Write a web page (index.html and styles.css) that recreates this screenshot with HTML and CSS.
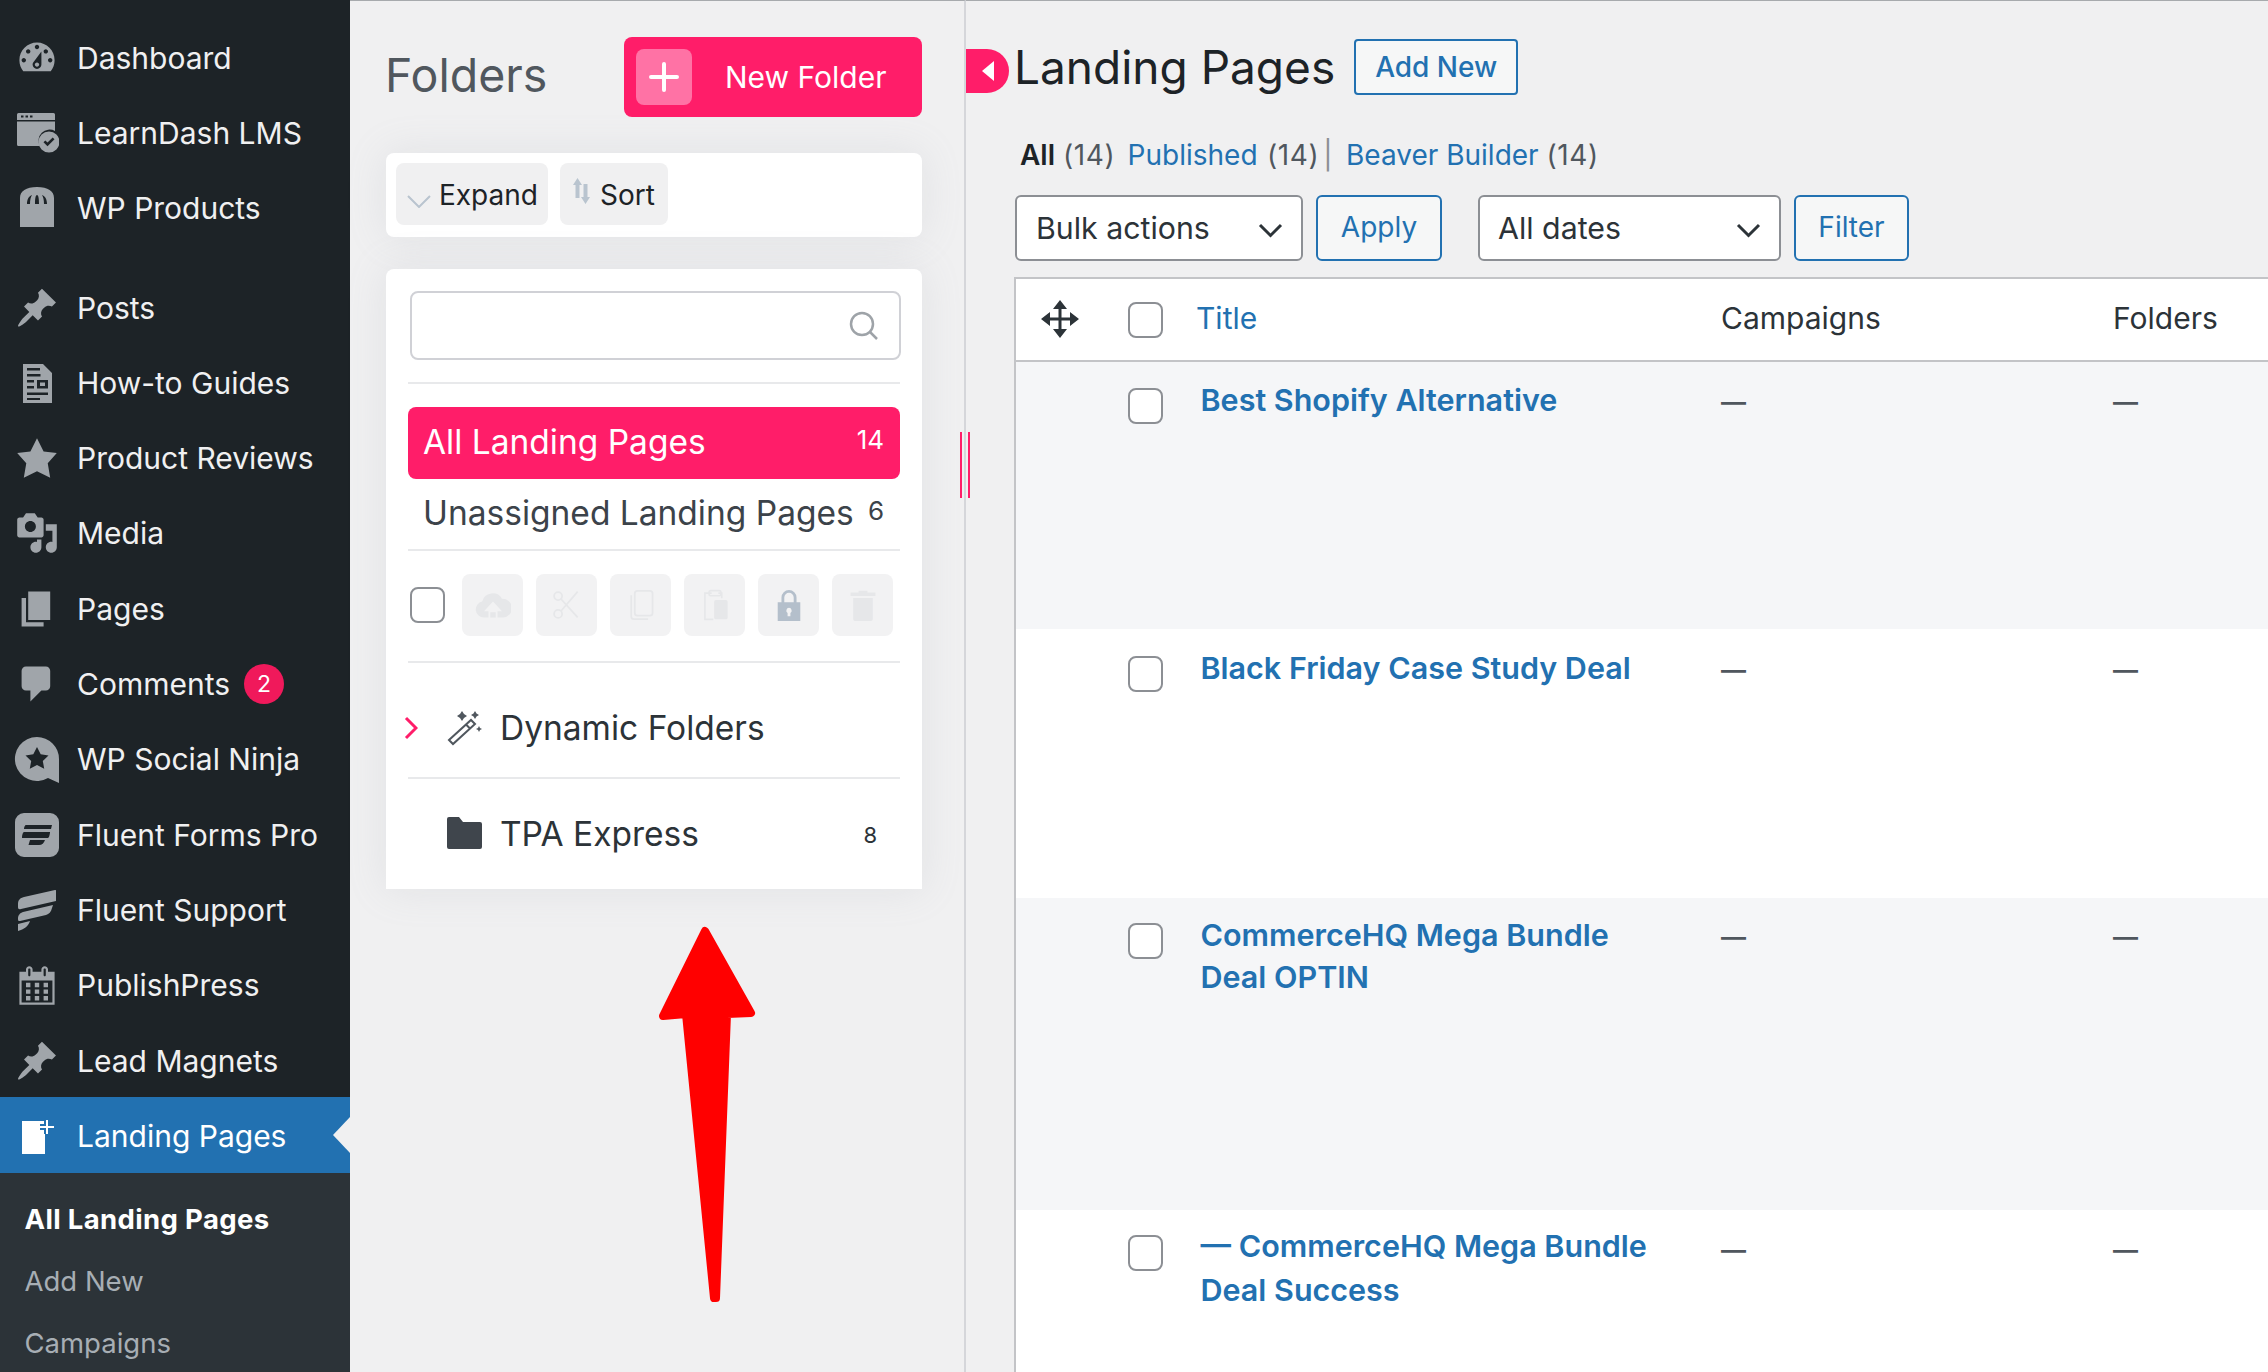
FILE: index.html
```html
<!DOCTYPE html>
<html lang="en">
<head>
<meta charset="utf-8">
<title>Landing Pages</title>
<link rel="stylesheet" href="styles.css">
</head>
<body>
<div class="page">
  <aside class="sidebar">
    <nav class="menu">
      <a class="item"><svg class="ico" viewBox="0 0 20 20"><path fill-rule="evenodd" d="M3.76 16h12.48c1.1-1.37 1.76-3.11 1.76-5 0-4.42-3.58-8-8-8s-8 3.58-8 8c0 1.89.66 3.63 1.76 5zM10 4c.55 0 1 .45 1 1s-.45 1-1 1-1-.45-1-1 .45-1 1-1zM6 6c.55 0 1 .45 1 1s-.45 1-1 1-1-.45-1-1 .45-1 1-1zm8 0c.55 0 1 .45 1 1s-.45 1-1 1-1-.45-1-1 .45-1 1-1zm-5.37 5.55L12 7v6c0 1.1-.9 2-2 2s-2-.9-2-2c0-.57.24-1.08.63-1.45zM4 10c.55 0 1 .45 1 1s-.45 1-1 1-1-.45-1-1 .45-1 1-1zm12 0c.55 0 1 .45 1 1s-.45 1-1 1-1-.45-1-1 .45-1 1-1zm-5 3c0-.55-.45-1-1-1s-1 .45-1 1 .45 1 1 1 1-.45 1-1z"/></svg><span>Dashboard</span></a>
      <a class="item"><svg class="ico" viewBox="0 0 44 44"><path fill-rule="evenodd" d="M2 3.500a1.500 1.500 0 0 1 1.500-1.500h35a1.500 1.500 0 0 1 1.500 1.500v5.500H2zM6 4.500h2.500v2H6zM10.500 4.500H13v2h-2.500zM15 4.500h2.500v2H15z"/><path d="M2 10.500h38v9.500a11 11 0 0 0-15 15H3.500A1.500 1.500 0 0 1 2 33.500z"/><path fill-rule="evenodd" d="M34 20.500a10.500 10.500 0 1 1 0 21 10.500 10.500 0 0 1 0-21zm-1.500 14.700l-4-4 1.800-1.800 2.200 2.200 5.200-5.200 1.800 1.800z"/></svg><span>LearnDash LMS</span></a>
      <a class="item"><svg class="ico" viewBox="0 0 44 44"><path fill-rule="evenodd" d="M5 19V12C5 5 11 1 22 1s17 4 17 11v29H5zM12 18h3c0-4 .7-7 2-9-3 1-5 4-5 9zM20 18h4c0-5-.5-9-2-9s-2 4-2 9zM29 18h3c0-5-2-8-5-9 1.300 2 2 5 2 9z"/></svg><span>WP Products</span></a>
      <div class="sep"></div>
      <a class="item"><svg class="ico" viewBox="0 0 20 20"><path d="M10.440 3.020l1.820-1.820 6.360 6.350-1.830 1.820c-1.050-.68-2.480-.57-3.410.36l-.75.75c-.92.93-1.040 2.350-.35 3.410l-1.830 1.820-2.410-2.410-2.800 2.790c-.42.42-3.380 2.710-3.800 2.290s1.860-3.390 2.280-3.810l2.790-2.790L4.100 9.360l1.830-1.820c1.050.69 2.480.57 3.400-.36l.75-.75c.93-.92 1.050-2.350.36-3.410z"/></svg><span>Posts</span></a>
      <a class="item"><svg class="ico" viewBox="0 0 44 44"><path fill-rule="evenodd" d="M8 3h20l9 9v30H8zM12 7v2.500h13V7zm0 6v2.500h13.500V13zm0 6v2.500h7V19zm0 6v2.500h7V25zm0 6.500V34h21v-2.500zM22 19v8.500h11V19zm3 2.500h5V25h-5zM12 37v2h13v-2z"/></svg><span>How-to Guides</span></a>
      <a class="item"><svg class="ico" viewBox="0 0 20 20"><path d="M10 1l3 6 6 .75-4.120 4.620L16 19l-6-3-6 3 1.130-6.630L1 7.750 7 7z"/></svg><span>Product Reviews</span></a>
      <a class="item"><svg class="ico" viewBox="0 0 20 20"><path fill-rule="evenodd" d="M13 11V4c0-.55-.45-1-1-1h-1.670L9 1H5L3.670 3H2c-.55 0-1 .45-1 1v7c0 .55.45 1 1 1h10c.55 0 1-.45 1-1zM7 4.500c1.380 0 2.500 1.120 2.500 2.500S8.380 9.500 7 9.500 4.500 8.380 4.500 7 5.620 4.500 7 4.500zM14 6h5v10.500c0 1.380-1.120 2.500-2.500 2.500S14 17.880 14 16.500s1.120-2.500 2.500-2.500c.17 0 .34.02.5.05V9h-3V6zm-4 8.050V13h2v3.500c0 1.380-1.120 2.500-2.500 2.500S7 17.880 7 16.500 8.120 14 9.500 14c.17 0 .34.02.5.05z"/></svg><span>Media</span></a>
      <a class="item"><svg class="ico" viewBox="0 0 20 20"><path d="M6 15V2h10v13H6zm-1 1h8v2H3V5h2v11z"/></svg><span>Pages</span></a>
      <a class="item"><svg class="ico" viewBox="0 0 20 20"><path d="M5 2h9c1.100 0 2 .9 2 2v7c0 1.100-.9 2-2 2h-2l-5 5v-5H5c-1.100 0-2-.9-2-2V4c0-1.100.9-2 2-2z"/></svg><span>Comments</span><b class="badge">2</b></a>
      <a class="item"><svg class="ico ico-free" viewBox="0 0 44 44"><path fill-rule="evenodd" d="M22 0a22 22 0 0 1 22 22v24L33 41A22 22 0 1 1 22 0zm0 10l3.700 7.300 7.800 1.100-5.700 5.500 1.400 7.900-7.200-3.800-7.200 3.800 1.400-7.900-5.700-5.500 7.800-1.100z"/></svg><span>WP Social Ninja</span></a>
      <a class="item"><svg class="ico" viewBox="0 0 44 44"><path fill-rule="evenodd" d="M9 0h26a9 9 0 0 1 9 9v26a9 9 0 0 1-9 9H9a9 9 0 0 1-9-9V9a9 9 0 0 1 9-9zM11 12c-1 0-2 2-2 4h27l1-4zM9 19c-1 0-2 3-2 6h26c1 0 2-4 2-6zM15 27l-1.500 5H24c3 0 5-2 6-5z"/></svg><span>Fluent Forms Pro</span></a>
      <a class="item"><svg class="ico" viewBox="0 0 44 44"><path d="M3 16c0-4 2-6 6-7l31-7c1-.2 1 .5 1 1v10L6 21c-2 .5-3 0-3-2zM3 31c0-4 2-6 5-7l30-7-1 3c-1 4-3 6-6 7L5 33c-1 .3-2 0-2-2zM3 36l12-3c-2 6-6 8-12 10z"/></svg><span>Fluent Support</span></a>
      <a class="item"><svg class="ico" viewBox="0 0 20 20"><path fill-rule="evenodd" d="M15 4h3v15H2V4h3V3c0-.41.15-.76.44-1.060.29-.29.65-.44 1.060-.44s.77.15 1.060.44c.29.3.44.65.44 1.060v1h4V3c0-.41.15-.76.44-1.060.29-.29.65-.44 1.060-.44s.77.15 1.060.44c.29.3.44.65.44 1.060v1zM6 3v2.500c0 .14.05.26.15.36.09.09.21.14.35.14s.26-.05.35-.14c.1-.1.15-.22.15-.36V3c0-.14-.05-.26-.15-.35-.09-.1-.21-.15-.35-.15s-.26.05-.35.15c-.1.09-.15.21-.15.35zm7 0v2.500c0 .14.05.26.14.36.1.09.22.14.36.14s.26-.05.36-.14c.09-.1.14-.22.14-.36V3c0-.14-.05-.26-.14-.35-.1-.1-.22-.15-.36-.15s-.26.05-.36.15c-.09.09-.14.21-.14.35zm4 15V8H3v10h14zM7 9v2H5V9h2zm2 0h2v2H9V9zm4 2V9h2v2h-2zm-6 1v2H5v-2h2zm2 0h2v2H9v-2zm4 2v-2h2v2h-2zm-6 1v2H5v-2h2zm4 2H9v-2h2v2zm4 0h-2v-2h2v2z"/></svg><span>PublishPress</span></a>
      <a class="item"><svg class="ico" viewBox="0 0 20 20"><path d="M10.440 3.020l1.820-1.820 6.360 6.350-1.830 1.820c-1.050-.68-2.480-.57-3.410.36l-.75.75c-.92.93-1.040 2.350-.35 3.410l-1.830 1.820-2.410-2.410-2.800 2.790c-.42.42-3.380 2.710-3.800 2.290s1.860-3.390 2.280-3.810l2.790-2.790L4.100 9.360l1.830-1.820c1.050.69 2.480.57 3.400-.36l.75-.75c.93-.92 1.050-2.350.36-3.410z"/></svg><span>Lead Magnets</span></a>
      <a class="item item-active"><svg class="ico" viewBox="0 0 44 44"><path d="M7 7h23v33H7z" fill="#fff"/><path d="M32 6v14M25 13h14" fill="none" stroke="#2271b1" stroke-width="6"/><path d="M32 6v14M25 13h14" fill="none" stroke="#fff" stroke-width="2"/></svg><span>Landing Pages</span></a>
    </nav>
    <ul class="submenu">
      <li class="sub-current">All Landing Pages</li>
      <li>Add New</li>
      <li>Campaigns</li>
    </ul>
  </aside>

  <section class="folders">
    <header class="folders-head">
      <h2 class="folders-title">Folders</h2>
      <button class="new-folder"><span class="plus"><svg viewBox="0 0 32 32"><path d="M16 3v26M3 16h26"/></svg></span><span class="new-label">New Folder</span></button>
    </header>
    <div class="card tools">
      <button class="tool tool-expand"><svg class="tool-ico" viewBox="0 0 24 13"><path d="M1 1l11 11L23 1"/></svg>Expand</button>
      <button class="tool tool-sort"><svg class="sort-ico" viewBox="0 0 19 26"><path d="M5.500 0l4.500 7H7.500v13h-4V7H1zM11.500 6h4v13H18l-4.500 7L9 19h2.500z"/></svg>Sort</button>
    </div>
    <div class="card tree">
      <div class="search"><svg class="search-ico" viewBox="0 0 30 30"><circle cx="13" cy="13" r="11"/><path d="M21 21l7 7"/></svg></div>
      <div class="rule rule-a"></div>
      <div class="folder-row folder-row-on"><span>All Landing Pages</span><small>14</small></div>
      <div class="folder-row folder-row-un"><span>Unassigned Landing Pages</span><small>6</small></div>
      <div class="rule rule-b"></div>
      <div class="actions">
        <span class="check check-tree"></span>
        <span class="act"><svg viewBox="0 0 40 32"><path fill-rule="evenodd" d="M10 30a9 9 0 0 1-2-17.800A12 12 0 0 1 30 9a10.500 10.500 0 0 1 1 21h-6v-7h5L20 12 10 23h5v7z"/><path d="M17 24h6v6h-6z"/></svg></span>
        <span class="act"><svg viewBox="0 0 32 36"><g class="stroke"><circle cx="6" cy="8" r="4.500"/><circle cx="6" cy="28" r="4.500"/><path d="M9 11l19 21M9 25L28 3"/></g></svg></span>
        <span class="act"><svg viewBox="0 0 32 36"><g class="stroke"><rect x="9" y="2" width="20" height="28" rx="3"/><path d="M5 7v24a3 3 0 0 0 3 3h16"/></g></svg></span>
        <span class="act"><svg viewBox="0 0 32 38"><g class="stroke"><path d="M12 5H4v31h10M20 5h4v6"/><rect x="9" y="2" width="14" height="6" rx="2"/></g><rect x="15" y="13" width="16" height="23" rx="2"/></svg></span>
        <span class="act act-lock"><svg viewBox="0 0 26 34"><path fill-rule="evenodd" d="M5 14V9a8 8 0 0 1 16 0v5h4v20H1V14zm3 0h10V9a5 5 0 0 0-10 0zm5 6a3 3 0 0 0-1.500 5.500V29h3v-3.500A3 3 0 0 0 13 20z"/></svg></span>
        <span class="act"><svg viewBox="0 0 30 36"><path d="M10 2h10v2h9v4H1V4h9zM4 10h22v24a2 2 0 0 1-2 2H6a2 2 0 0 1-2-2z"/></svg></span>
      </div>
      <div class="rule rule-c"></div>
      <div class="tree-row tree-dynamic">
        <svg class="caret" viewBox="0 0 14 24"><path d="M2 2l10 10L2 22"/></svg>
        <svg class="wand" viewBox="0 0 36 36"><path class="wand-line" d="M2 30L24 10l4 4L6 34z M19 14.500l4 4"/><path class="wand-fill" d="M13 4l2-3 2 3 3 2-3 2-2 3-2-3-3-2zM28 1l1.500 2.500L32 5l-2.500 1.500L28 9l-1.500-2.500L24 5l2.500-1.500zM32 16l1 2 2 1-2 1-1 2-1-2-2-1 2-1z"/></svg>
        <span>Dynamic Folders</span>
      </div>
      <div class="rule rule-d"></div>
      <div class="tree-row tree-folder">
        <svg class="folder-ico" viewBox="0 0 35 32"><path d="M2 0h10l4 5h17a2 2 0 0 1 2 2v23a2 2 0 0 1-2 2H2a2 2 0 0 1-2-2V2a2 2 0 0 1 2-2z"/></svg>
        <span>TPA Express</span><small>8</small>
      </div>
    </div>
    <div class="handle"></div>
  </section>

  <main class="content">
    <span class="collapse"><svg viewBox="0 0 12 20"><path d="M12 0v20L0 10z"/></svg></span>
    <div class="title-row">
      <h1>Landing Pages</h1>
      <a class="add-new">Add New</a>
    </div>
    <p class="views"><b>All</b> <i>(14)</i> <a class="v-pub">Published</a> <i class="v-count">(14)</i><i class="pipe">|</i> <a class="v-bb">Beaver Builder</a> <i>(14)</i></p>
    <div class="filters">
      <div class="select select-bulk"><span>Bulk actions</span><svg viewBox="0 0 25 15"><path d="M2 2l10.500 10.500L23 2"/></svg></div>
      <button class="btn btn-apply">Apply</button>
      <div class="select select-dates"><span>All dates</span><svg viewBox="0 0 25 15"><path d="M2 2l10.500 10.500L23 2"/></svg></div>
      <button class="btn btn-filter">Filter</button>
    </div>
    <div class="table">
      <div class="thead grid">
        <svg class="move" viewBox="0 0 38 38"><path d="M19 0l7 9h-5.500v8.500H29V12l9 7-9 7v-5.500h-8.500V29H26l-7 9-7-9h5.500v-8.500H9V26l-9-7 9-7v5.500h8.500V9H12z"/></svg>
        <span class="check"></span>
        <a class="th-title">Title</a>
        <span class="th-text">Campaigns</span>
        <span class="th-text">Folders</span>
      </div>
      <div class="row grid row-1"><i></i><span class="check"></span><a>Best Shopify Alternative</a><span class="dash">—</span><span class="dash">—</span></div>
      <div class="row grid row-2"><i></i><span class="check"></span><a>Black Friday Case Study Deal</a><span class="dash">—</span><span class="dash">—</span></div>
      <div class="row grid row-3"><i></i><span class="check"></span><a>CommerceHQ Mega Bundle<br>Deal OPTIN</a><span class="dash">—</span><span class="dash">—</span></div>
      <div class="row grid row-4"><i></i><span class="check"></span><a>— CommerceHQ Mega Bundle<br>Deal Success</a><span class="dash">—</span><span class="dash">—</span></div>
    </div>
  </main>

  <svg class="arrow" viewBox="0 0 120 400"><path d="M65 26L111 108 87 109 76 393 74 393 46 109 23 111z"/></svg>
</div>
</body>
</html>
```

FILE: styles.css
```css
* { box-sizing: border-box; }
html, body { margin: 0; height: 100%; overflow: hidden; }
body { font-family: Inter, "Liberation Sans", sans-serif; color: #3c434a; background: #f0f0f1; }
button { font: inherit; border: 0; padding: 0; }
a { text-decoration: none; }
p, h1, h2, ul { margin: 0; padding: 0; }

.page { display: flex; height: 1372px; width: 2268px; position: relative; overflow: hidden; }

/* sidebar */
.sidebar { flex: 0 0 350px; background: #1d2327; display: flex; flex-direction: column; }
.menu { display: flex; flex-direction: column; padding-top: 20px; }
.item { display: flex; align-items: center; height: 75.3px; padding-left: 15px; color: #f0f0f1; font-size: 30px; line-height: 1; position: relative; }
.sep { height: 24px; }
.ico { width: 44px; height: 44px; fill: #a0a5aa; margin-right: 18px; flex: none; }
.ico-free { overflow: visible; }
.badge { width: 40px; height: 40px; margin-left: 14px; border-radius: 50%; background: #f0195b; color: #fff; font-size: 23px; font-weight: 400; display: flex; align-items: center; justify-content: center; }
.item-active { background: #2271b1; color: #fff; height: 76px; margin-top: -1px; padding-top: 1px; }
.item-active::after { content: ""; position: absolute; right: 0; top: 50%; margin-top: -18px; border: 18px solid transparent; border-left: 0; border-right: 17px solid #f0f0f1; }
.submenu { flex: 1; background: #2c3338; list-style: none; padding-top: 15px; color: #a7aeb4; font-size: 27.500px; }
.submenu li { height: 62px; line-height: 62px; padding-left: 24.500px; }
.submenu .sub-current { color: #fff; font-weight: 700; letter-spacing: .35px; }

/* folders panel */
.folders { flex: 0 0 616px; min-width: 0; padding: 37px 42px 0 36px; border-top: 1px solid #a7aaad; border-right: 2px solid #d5d6da; position: relative; }
.folders-head { display: flex; justify-content: space-between; align-items: center; height: 80px; margin-bottom: 36px; margin-top: -1px; }
.folders-title { font-size: 46.500px; font-weight: 400; color: #50575e; line-height: 1; margin: -3px 0 0 -1px; }
.new-folder { width: 298px; height: 80px; background: #ff1d69; border-radius: 8px; color: #fff; display: flex; align-items: center; padding-left: 12px; font-size: 30px; }
.plus { width: 56px; height: 56px; border-radius: 8px; background: #ff72a5; display: flex; align-items: center; justify-content: center; margin-right: 33px; }
.plus svg { width: 32px; height: 32px; fill: none; stroke: #fff; stroke-width: 4; stroke-linecap: round; }
.card { background: #fff; border-radius: 8px; box-shadow: 0 0 40px rgba(150,155,170,.16); }
.tools { height: 84px; padding: 10px; display: flex; gap: 12px; margin-bottom: 32px; }
.tool { height: 62px; background: #f0f0f1; border-radius: 8px; font-size: 28px; color: #1d2327; display: flex; align-items: center; padding-top: 2px; }
.tool-expand { width: 152px; padding-left: 11px; }
.tool-sort { width: 108px; padding-left: 12px; }
.tool-ico { width: 24px; height: 13px; fill: none; stroke: #b9c4cf; stroke-width: 2; margin: 12px 8px 0 0; }
.sort-ico { width: 19px; height: 26px; fill: #b9c4cf; margin: -8px 9px 0 0; }
.tree { height: 620px; padding: 22px 22px 0; border-radius: 8px 8px 0 0; }
.search { height: 69px; margin: 0 -1px 0 2px; border: 2px solid #d0d1d6; border-radius: 8px; display: flex; align-items: center; justify-content: flex-end; padding-right: 20px; }
.search-ico { width: 30px; height: 30px; fill: none; stroke: #9ea3a8; stroke-width: 2.500; }
.rule { height: 2px; background: #e8e9eb; }
.rule-a { margin-top: 22px; margin-bottom: 23px; }
.folder-row { display: flex; align-items: center; justify-content: space-between; height: 72px; padding: 0 16px 0 15px; font-size: 33.500px; color: #3c434a; line-height: 1; }
.folder-row small { font-size: 26px; margin-top: -6px; }
.folder-row-on { background: #ff1d69; color: #fff; border-radius: 8px; }
.folder-row-un { height: 70px; }
.actions { display: flex; align-items: center; height: 110px; padding: 0 0 2px 2px; }
.check { width: 35px; height: 36px; display: block; flex: none; background: #fff; border: 2px solid #8c8f94; border-radius: 8px; }
.check-tree { margin-right: 17px; }
.act { width: 61px; height: 62px; flex: none; border-radius: 8px; background: #f2f2f3; margin-right: 13px; display: flex; align-items: center; justify-content: center; }
.act:last-child { margin-right: 0; }
.act svg { height: 32px; width: 36px; fill: #e6e7e9; }
.act .stroke { fill: none; stroke: #e6e7e9; stroke-width: 2; }
.act-lock svg { fill: #b4bfcb; }
.tree-row { display: flex; align-items: center; font-size: 33.500px; line-height: 1; color: #2c3338; position: relative; padding-left: 92px; }
.tree-dynamic { height: 114px; padding-top: 18px; }
.tree-folder { height: 110px; padding-top: 2px; }
.caret { position: absolute; left: -4px; top: 53px; width: 14px; height: 24px; fill: none; stroke: #ff1d69; stroke-width: 3; }
.wand { position: absolute; left: 39px; top: 47px; width: 36px; height: 36px; }
.wand-line { fill: none; stroke: #50575e; stroke-width: 2; }
.wand-fill { fill: #50575e; }
.folder-ico { position: absolute; left: 39px; top: 38px; width: 35px; height: 32px; fill: #3f454c; }
.tree-folder small { position: absolute; right: 23px; font-size: 22px; }
.handle { position: absolute; left: 610px; top: 431px; width: 10px; height: 66px; border-left: 2px solid #ff1d69; border-right: 2px solid #ff1d69; }

/* main column */
.content { flex: 1; min-width: 0; padding-left: 48px; border-top: 1px solid #a7aaad; position: relative; }
.collapse { position: absolute; left: 0; top: 48px; width: 43px; height: 44px; background: #ff1d69; border-radius: 0 22px 22px 0; display: flex; align-items: center; padding-left: 16px; }
.collapse svg { width: 12px; height: 20px; fill: #fff; }
.title-row { display: flex; align-items: center; height: 56px; margin-top: 38px; gap: 19px; }
h1 { font-size: 46px; font-weight: 400; color: #1d2327; line-height: 1; }
.add-new { width: 164px; height: 56px; border: 2px solid #2271b1; background: #f6f7f7; border-radius: 4px; color: #2271b1; font-size: 28px; font-weight: 500; display: flex; align-items: center; justify-content: center; }
.views { margin: 40px 0 0 6px; height: 40px; line-height: 40px; font-size: 28px; white-space: pre-wrap; }
.views b { color: #1d2327; font-weight: 600; }
.views i { font-style: normal; color: #50575e; letter-spacing: .6px; }
.views a { color: #2271b1; }
.views .v-pub { margin-left: 4.500px; }
.views .v-count { margin-left: 1.500px; }
.views .pipe { margin-left: 4px; color: #8c8f94; }
.views .v-bb { margin-left: 5px; }
.filters { display: flex; align-items: center; margin-top: 20px; height: 66px; margin-left: 1px; }
.select { height: 66px; background: #fff; border: 2px solid #8c8f94; border-radius: 6px; display: flex; align-items: center; justify-content: space-between; padding: 0 18px 0 19px; font-size: 30.300px; color: #2c3338; }
.select svg { width: 25px; height: 15px; fill: none; stroke: #2c3338; stroke-width: 3; margin-top: 4px; }
.select-bulk { width: 288px; margin-right: 13px; }
.select-dates { width: 303px; margin-right: 13px; padding-left: 18px; }
.btn { height: 66px; background: #f6f7f7; border: 2px solid #2271b1; border-radius: 6px; color: #2271b1; font-size: 28px; padding-bottom: 2px; }
.btn-apply { width: 126px; margin-right: 36px; }
.btn-filter { width: 115px; }
.table { margin-top: 16px; height: 1096px; border-top: 2px solid #c3c4c7; border-left: 2px solid #c3c4c7; background: #fff; display: flex; flex-direction: column; }
.grid { display: grid; grid-template-columns: 112px 72px 521px 392px 1fr; }
.thead { height: 83px; border-bottom: 2px solid #c3c4c7; align-items: center; font-size: 30px; color: #2c3338; flex: none; }
.th-text, .th-title { margin-top: -4px; }
.move { width: 38px; height: 38px; margin: -2px 0 0 25px; fill: #2c3338; }
.th-title { color: #2271b1; margin-left: -4px; }
.row { padding-top: 19px; line-height: 42px; font-size: 30.500px; flex: none; }
.row a { color: #2271b1; font-weight: 600; margin-top: -2px; margin-left: .5px; }
.row .check { margin-top: 7px; }
.dash { color: #50575e; font-size: 25px; font-weight: 600; }
.row-1 { height: 267px; background: #f5f6f8; }
.row-2 { height: 269px; padding-top: 20px; }
.row-3 { height: 312px; background: #f5f6f8; padding-top: 18px; }
.row-4 { flex: 1; padding-top: 18px; line-height: 44px; }
.row-3 a { margin-top: -2px; }
.row-4 a { margin-top: -4px; }

.arrow { position: absolute; left: 640px; top: 905px; width: 120px; height: 400px; fill: #f00; stroke: #f00; stroke-width: 8; stroke-linejoin: round; }
```
